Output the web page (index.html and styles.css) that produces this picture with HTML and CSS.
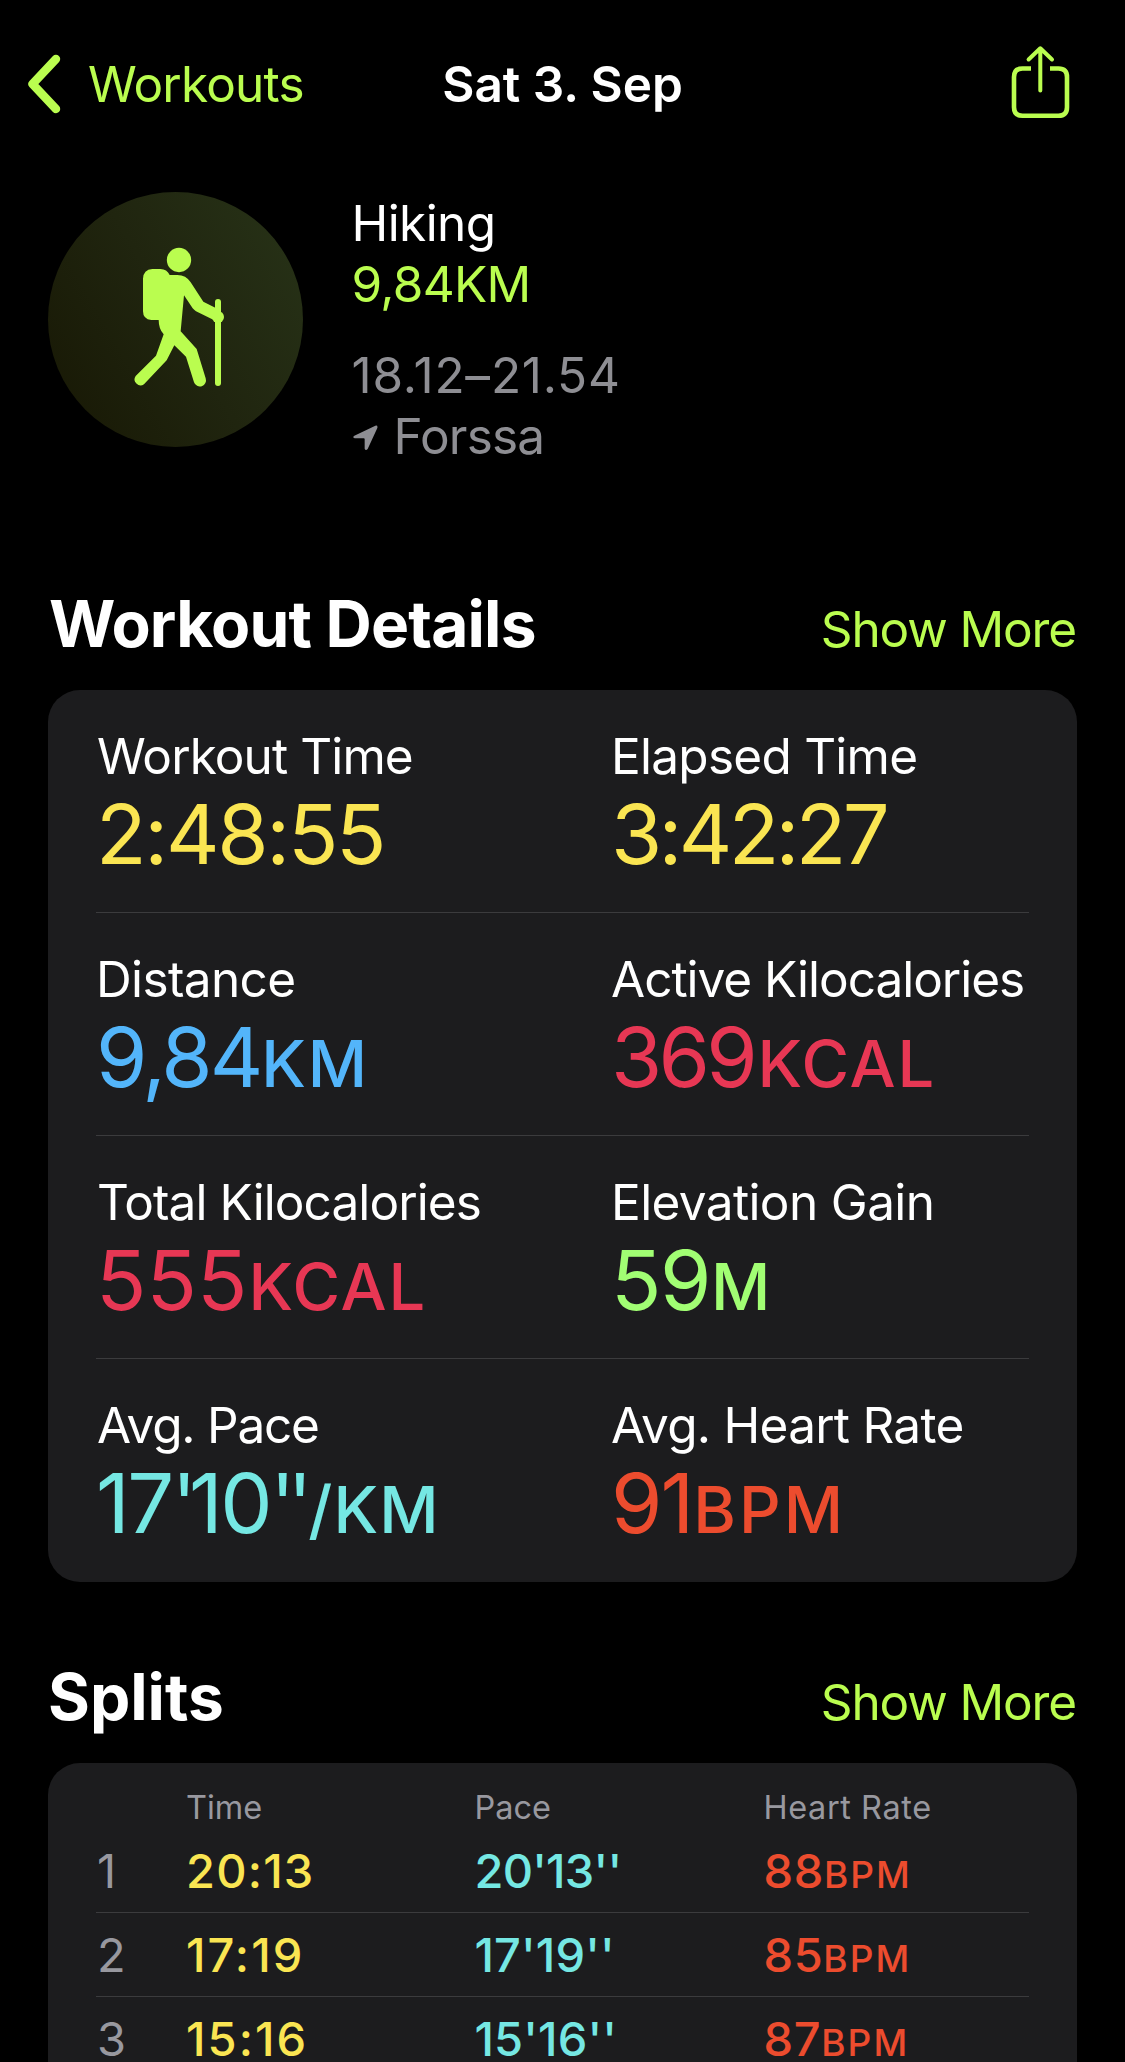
FILE: index.html
```
<!DOCTYPE html>
<html lang="en">
<head>
<meta charset="utf-8">
<title>Workout</title>
<link rel="stylesheet" href="styles.css">
</head>
<body>
<header class="nav">
  <a class="back">
    <svg class="chevron" viewBox="0 0 36 60" width="36" height="60"><path d="M29 5 5.500 30 29 55"/></svg>
    <span class="back-label">Workouts</span>
  </a>
  <h1 class="nav-title">Sat 3. Sep</h1>
  <svg class="share" viewBox="0 0 60 76" width="60" height="76">
    <path class="tray" d="M21 24.500H12.500Q4 24.500 4 33V63.300Q4 71.800 12.500 71.800H48.500Q57 71.800 57 63.300V33Q57 24.500 48.500 24.500H40"/>
    <path class="arrow" d="M30.300 46.500V5M18.600 15.500 30.300 4.300 42 15.500"/>
  </svg>
</header>

<section class="summary">
  <div class="badge">
    <svg viewBox="-126 -114 765 765" width="255" height="255">
      <g fill="#bafd4f">
        <circle cx="267" cy="90" r="36.500"/>
        <path d="M187 117H211Q231 117 239 135H262Q288 135 302 157L340 215L385 238V277L318 244Q312 240 308 235L282 196L272 304L320 357L347 445A18.500 18.500 0 0 1 312 457L288 380L253 346L230 391L162 463A18 18 0 0 1 137 438L198 377L221 313Q206 297 206 270H184Q159 268 159 244V146Q160 119 187 117Z"/>
        <circle cx="384" cy="261" r="18"/>
        <rect x="375" y="207" width="18" height="261" rx="9"/>
      </g>
    </svg>
  </div>
  <div class="facts">
    <div class="fact name">Hiking</div>
    <div class="fact dist">9,84KM</div>
    <div class="fact time">18.12–21.54</div>
    <div class="fact place"><svg viewBox="0 0 78 78" width="26" height="26"><path d="M67 2Q75 0 73 9L44 72Q38 79 35 71V42Q35 40 32 40H5Q-3 37 4 32Z"/></svg><span>Forssa</span></div>
  </div>
</section>

<section class="block">
  <div class="block-head"><h2 class="t-details">Workout Details</h2><a class="more">Show More</a></div>
  <div class="card">
    <div class="stats">
      <div class="stat"><div class="label">Workout Time</div><div class="value yellow v-clock">2:48:55</div></div>
      <div class="stat"><div class="label l-loose">Elapsed Time</div><div class="value yellow v-elapsed">3:42:27</div></div>
    </div>
    <div class="stats">
      <div class="stat"><div class="label l-open">Distance</div><div class="value blue v-dist">9,84<span class="unit">KM</span></div></div>
      <div class="stat"><div class="label l-tight">Active Kilocalories</div><div class="value red v-active">369<span class="unit">KCAL</span></div></div>
    </div>
    <div class="stats">
      <div class="stat"><div class="label">Total Kilocalories</div><div class="value red v-total">555<span class="unit">KCAL</span></div></div>
      <div class="stat"><div class="label l-open">Elevation Gain</div><div class="value green v-elev">59<span class="unit">M</span></div></div>
    </div>
    <div class="stats">
      <div class="stat"><div class="label l-pace">Avg. Pace</div><div class="value cyan v-pace">17<span class="prime">'</span>10<span class="prime">''</span><span class="unit">/KM</span></div></div>
      <div class="stat"><div class="label l-loose">Avg. Heart Rate</div><div class="value orange v-heart">91<span class="unit">BPM</span></div></div>
    </div>
  </div>
</section>

<section class="block">
  <div class="block-head"><h2>Splits</h2><a class="more">Show More</a></div>
  <div class="card splits">
    <div class="cols head"><span></span><span>Time</span><span>Pace</span><span class="h-rate">Heart Rate</span></div>
    <div class="cols row"><span class="num">1</span><span class="yellow s-first">20:13</span><span class="cyan s-pace-first">20'13''</span><span class="orange">88<span class="unit">BPM</span></span></div>
    <div class="cols row"><span class="num">2</span><span class="yellow s-time">17:19</span><span class="cyan s-pace">17'19''</span><span class="orange">85<span class="unit">BPM</span></span></div>
    <div class="cols row"><span class="num">3</span><span class="yellow s-time">15:16</span><span class="cyan s-pace">15'16''</span><span class="orange">87<span class="unit">BPM</span></span></div>
  </div>
</section>
</body>
</html>
```
FILE: styles.css
```
* { box-sizing: border-box; margin: 0; padding: 0; }
html, body { height: 2062px; overflow: hidden; background: #000; }
body {
  width: 1125px;
  color: #fff;
  font: 400 49.5px/60px Inter, "Liberation Sans", sans-serif;
  white-space: nowrap;
}

/* Navigation bar */
.nav {
  display: grid;
  grid-template-columns: 1fr auto 1fr;
  align-items: center;
  height: 168px;
  padding: 0 55px 0 27px;
}
.back { display: flex; align-items: center; color: #bafd4f; }
.back-label { margin-left: 25px; letter-spacing: -0.8px; }
.chevron { fill: none; stroke: #bafd4f; stroke-width: 8.4; stroke-linecap: round; stroke-linejoin: round; }
.nav-title { font-size: 49.5px; font-weight: 600; margin-left: -27px; margin-right: -55px; }
.share { justify-self: end; margin-top: -4px; fill: none; stroke: #bafd4f; stroke-width: 4.6; }
.arrow { stroke-width: 4; stroke-linecap: round; stroke-linejoin: round; }

/* Summary */
.summary { display: flex; gap: 48.500px; padding: 24px 48px 0; height: 417px; }
.badge {
  width: 255px; height: 255px; border-radius: 50%;
  background: linear-gradient(60deg, #191a06 10%, #20250f 50%, #273217 95%);
}
.badge svg { display: block; }
.facts { padding-top: 0.5px; }
.fact { line-height: 61px; letter-spacing: -0.6px; }
.dist { color: #bafd4f; letter-spacing: -0.69px; }
.time { margin-top: 30px; color: #8e8e93; letter-spacing: 0.78px; }
.place { display: flex; align-items: center; color: #8e8e93; letter-spacing: -0.8px; }
.place svg { margin: 4px 14.500px 0 1.500px; fill: #8e8e93; }

/* Sections */
.block { padding: 0 48px; }
.block + .block { margin-top: 76px; }
.block-head { display: flex; justify-content: space-between; align-items: baseline; height: 105px; line-height: 77px; }
h2 { font-size: 64px; font-weight: 700; }
.t-details { margin-left: 1px; letter-spacing: -0.8px; }
.more { color: #bafd4f; letter-spacing: -1.13px; line-height: 60px; margin-right: 1px; }
.card { background: #1c1c1e; border-radius: 32px; padding: 0 48px; }

/* Workout statistics */
.stats { display: grid; grid-template-columns: 515px 1fr; height: 223px; padding-top: 36px; }
.stats + .stats, .row + .row { box-shadow: 0 -1px 0 #3b3b3d; }
.label { letter-spacing: -0.9px; margin-left: 1px; }
.l-loose { letter-spacing: -0.74px; }
.l-open { letter-spacing: -0.62px; }
.l-open, .stat:last-child .label { margin-left: 0; }
.l-tight { letter-spacing: -1.02px; }
.l-pace { letter-spacing: -1.23px; }
.value { font-size: 83px; line-height: 96px; }
.value .unit { font-size: 65px; line-height: 1; letter-spacing: 1.8px; font-weight: 500; }
.v-clock { letter-spacing: -2.3px; }
.v-elapsed { letter-spacing: -3.7px; }
.v-dist { letter-spacing: -3.02px; }
.v-dist .unit { margin-left: 1px; }
.v-active { letter-spacing: -3.77px; }
.v-active .unit { margin-left: 3.5px; }
.v-total .unit, .v-elev .unit, .v-pace .unit, .v-heart .unit { margin-left: 1px; }
.v-elev { letter-spacing: -1.46px; }
.v-pace { letter-spacing: -2.5px; }
.prime { letter-spacing: -7.6px; }
.v-pace .unit { margin-left: 3.5px; letter-spacing: 1.2px; }
.v-heart { letter-spacing: -1.97px; }
.v-heart .unit { letter-spacing: 3px; }

.yellow { color: #fae552; }
.blue { color: #53b5fa; }
.red { color: #e73754; }
.green { color: #a1fe73; }
.cyan { color: #75e7e3; }
.orange { color: #ec4c2e; }

/* Splits table */
.splits { height: 330px; padding-top: 25px; }
.cols { display: grid; grid-template-columns: 90px 288.500px 289px 1fr; }
.head { height: 41px; font-size: 32.5px; line-height: 40px; color: #98989f; }
.h-rate { letter-spacing: 0.57px; }
.row { height: 84px; font-size: 47px; line-height: 84px; font-weight: 500; }
.row .orange { letter-spacing: 0.6px; }
.row .unit { font-size: 37px; line-height: 1; letter-spacing: 2.1px; }
.num { color: #98989f; font-weight: 400; padding-left: 1px; }
.s-first { letter-spacing: 1.2px; }
.s-time { letter-spacing: 2.05px; }
.s-pace { letter-spacing: 0.1px; }
.s-pace-first { letter-spacing: -0.8px; }
```
